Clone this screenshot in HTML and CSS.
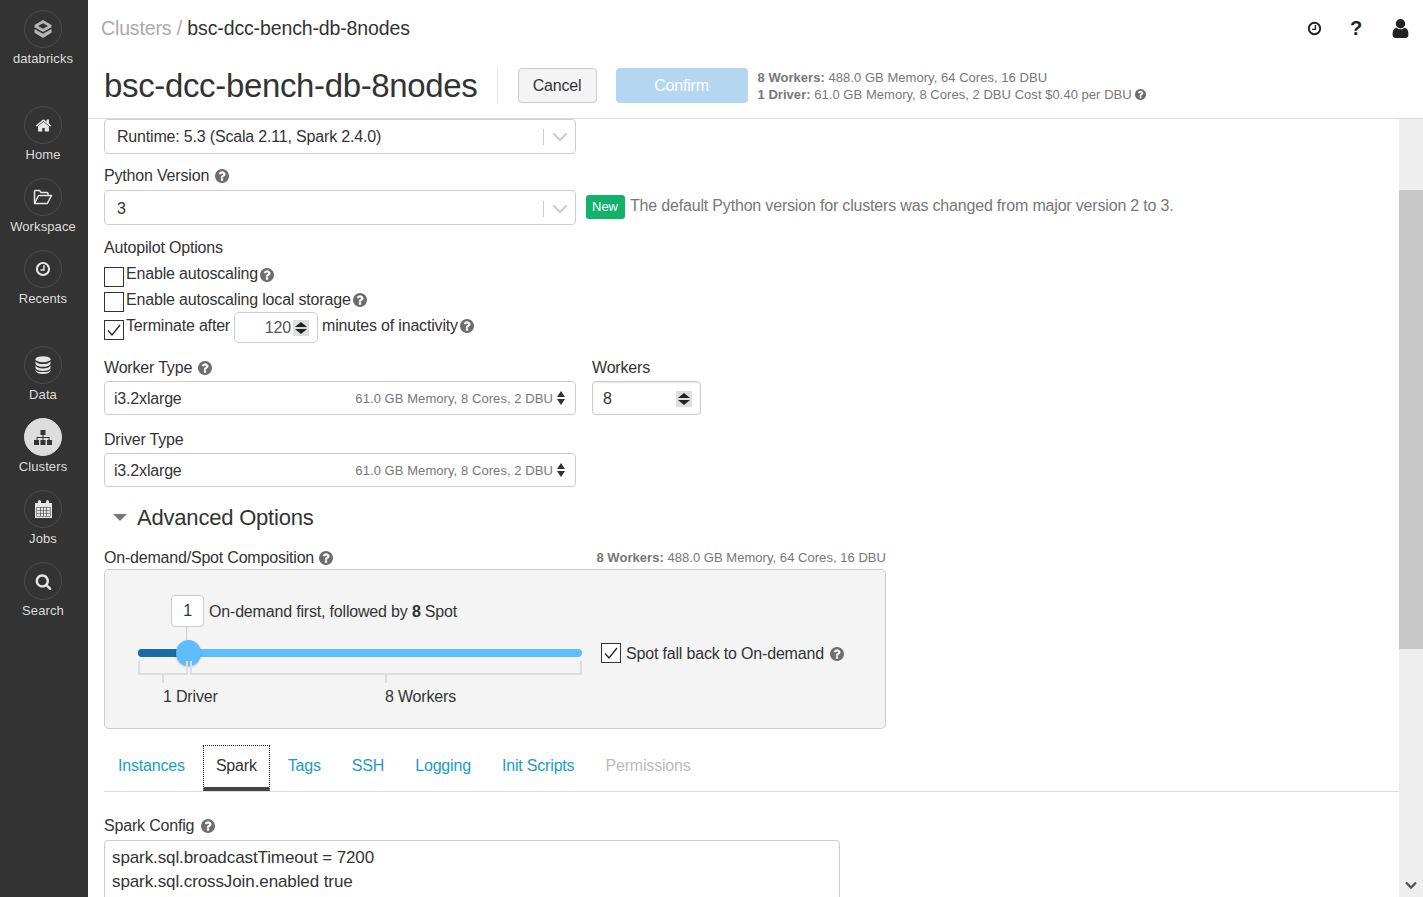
FILE: index.html
```html
<!DOCTYPE html>
<html>
<head>
	<title>bsc-dcc-bench-db-8nodes</title>
	<link rel="stylesheet" href="styles.css">
</head>
<body>
	<svg class="icon-defs" width="0" height="0">
		<symbol id="i-help" viewBox="128 128 1536 1536"><path d="M1024 1376v-192q0-14-9-23t-23-9h-192q-14 0-23 9t-9 23v192q0 14 9 23t23 9h192q14 0 23-9t9-23zm256-672q0-88-55.5-163t-138.5-116-170-41q-243 0-371 213-15 24 8 42l132 100q7 6 19 6 16 0 25-12 53-68 86-92 34-24 86-24 48 0 85.5 26t37.5 59q0 38-20 61t-68 45q-63 28-115.5 86.5t-52.5 125.5v36q0 14 9 23t23 9h192q14 0 23-9t9-23q0-19 21.5-49.5t54.5-49.5q32-18 49-28.5t46-35 44.5-48 28-60.5 12.5-81zm384 192q0 209-103 385.5t-279.5 279.5-385.5 103-385.5-103-279.5-279.5-103-385.5 103-385.5 279.5-279.5 385.5-103 385.5 103 279.5 279.5 103 385.5z"/></symbol>
		<symbol id="i-clock" viewBox="0 0 20 20"><circle cx="10" cy="10" r="7.6" fill="none" stroke="currentColor" stroke-width="2.6"/><path d="M11.2 5.4v5.8H6.8" fill="none" stroke="currentColor" stroke-width="1.9"/></symbol>
	</svg>

	<nav class="sidebar">
		<a class="nav-item nav-logo">
			<span class="nav-circle">
				<svg width="20" height="20" viewBox="0 0 20 20"><path d="M10 1l8.500 5v2.200L10 13 1.500 8.200V6z" fill="#b5b5b5"/><path d="M10 4.200L5 6.900l5 2.800 5-2.800z" fill="#333"/><path d="M1.500 10l8.500 4.800 8.500-4.800v3.800L10 19l-8.500-5.200z" fill="#b5b5b5"/></svg>
			</span>
			<span class="nav-label">databricks</span>
		</a>
		<div class="nav-group nav-group-main">
			<a class="nav-item">
				<span class="nav-circle">
					<svg width="17" height="17" viewBox="0 0 1792 1792" fill="#e6e6e6"><path d="M1472 992v480q0 26-19 45t-45 19h-384v-384h-256v384h-384q-26 0-45-19t-19-45v-480q0-1 .5-3t.5-3l575-474 575 474q1 2 1 6zm223-69l-62 74q-8 9-21 11h-3q-13 0-21-7l-692-577-692 577q-12 8-24 7-13-2-21-11l-62-74q-8-10-7-23.5t11-21.5l719-599q32-26 76-26t76 26l244 204v-195q0-14 9-23t23-9h192q14 0 23 9t9 23v408l219 182q10 8 11 21.5t-7 23.5z"/></svg>
				</span>
				<span class="nav-label">Home</span>
			</a>
			<a class="nav-item">
				<span class="nav-circle">
					<svg width="20" height="16" viewBox="0 0 20 16" fill="none" stroke="#e6e6e6" stroke-width="1.500" stroke-linejoin="round"><path d="M1.500 14V2.500q0-1 1-1h4l1.500 2h6q1 0 1 1V6.500"/><path d="M1.500 14.500h12.800l4.200-8H5.500z"/></svg>
				</span>
				<span class="nav-label">Workspace</span>
			</a>
			<a class="nav-item">
				<span class="nav-circle nav-circle-light">
					<svg class="nav-clock" width="16" height="16"><use href="#i-clock"/></svg>
				</span>
				<span class="nav-label">Recents</span>
			</a>
		</div>
		<div class="nav-group nav-group-data">
			<a class="nav-item">
				<span class="nav-circle">
					<svg width="16" height="18" viewBox="0 0 16 18" fill="#e6e6e6"><ellipse cx="8" cy="3.200" rx="7.500" ry="3"/><path d="M.5 5.200c1 2 3.800 2.900 7.500 2.900s6.500-.9 7.500-2.900V8c-1 1.900-3.800 2.800-7.500 2.800S1.500 9.900.5 8z"/><path d="M.5 9.600c1 2 3.800 2.800 7.500 2.800s6.500-.8 7.500-2.800v2.700c-1 1.900-3.800 2.700-7.500 2.700s-6.500-.8-7.500-2.700z"/><path d="M.5 13.800c1 2 3.800 2.300 7.500 2.300s6.500-.3 7.500-2.300v1.200c-1 2-3.800 3-7.500 3s-6.500-1-7.500-3z"/></svg>
				</span>
				<span class="nav-label">Data</span>
			</a>
			<a class="nav-item">
				<span class="nav-circle nav-circle-active">
					<svg width="18" height="15" viewBox="0 0 18 15" fill="#333"><rect x="6.500" y="0" width="5" height="5"/><rect x="0" y="10" width="5" height="5"/><rect x="6.500" y="10" width="5" height="5"/><rect x="13" y="10" width="5" height="5"/><path d="M8.500 5h1v2h6v3h-1V8h-5v2h-1V8h-5v2h-1V7h6z"/></svg>
				</span>
				<span class="nav-label">Clusters</span>
			</a>
			<a class="nav-item">
				<span class="nav-circle">
					<svg width="17" height="18" viewBox="0 0 17 18" fill="#e6e6e6"><path d="M0 3h3V1.500q0-1.500 1.500-1.500T6 1.500V3h5V1.500Q11 0 12.500 0T14 1.500V3h3v15H0z"/><path d="M1.500 7h14v9.500h-14z" fill="#333"/><path d="M2 7.500h3v2.400H2zm3.600 0h2.600v2.400H5.600zm3.200 0h2.600v2.400H8.800zm3.200 0h3v2.400h-3zM2 10.500h3v2.400H2zm3.600 0h2.600v2.400H5.600zm3.200 0h2.600v2.400H8.800zm3.200 0h3v2.400h-3zM2 13.500h3V16H2zm3.600 0h2.600V16H5.600zm3.200 0h2.600V16H8.800zm3.200 0h3V16h-3z"/></svg>
				</span>
				<span class="nav-label">Jobs</span>
			</a>
			<a class="nav-item">
				<span class="nav-circle">
					<svg width="17" height="17" viewBox="0 0 1792 1792" fill="#e6e6e6"><path d="M1216 832q0-185-131.500-316.500t-316.500-131.500-316.500 131.500-131.500 316.500 131.500 316.500 316.500 131.500 316.500-131.500 131.500-316.500zm512 832q0 52-38 90t-90 38q-54 0-90-38l-343-342q-179 124-399 124-143 0-273.500-55.500t-225-150-150-225-55.500-273.500 55.500-273.500 150-225 225-150 273.500-55.500 273.500 55.500 225 150 150 225 55.500 273.500q0 220-124 399l343 343q37 37 37 90z"/></svg>
				</span>
				<span class="nav-label">Search</span>
			</a>
		</div>
	</nav>

	<div class="main">
		<header class="topbar">
			<div class="topbar-row">
				<div class="breadcrumb"><span class="crumb-muted">Clusters /</span> bsc-dcc-bench-db-8nodes</div>
				<div class="top-icons">
					<svg class="top-clock" width="15" height="15"><use href="#i-clock"/></svg>
					<span class="top-help">?</span>
					<svg width="19" height="19" viewBox="256 128 1280 1536" fill="#222"><path d="M1536 1399q0 109-62.500 187t-150.500 78h-854q-88 0-150.500-78t-62.500-187q0-85 8.500-160.500t31.500-152 58.500-131 94-89 134.500-34.500q131 128 313 128t313-128q76 0 134.500 34.500t94 89 58.500 131 31.500 152 8.500 160.500zm-256-887q0 159-112.500 271.500t-271.500 112.500-271.500-112.500-112.500-271.500 112.500-271.500 271.500-112.500 271.500 112.500 112.500 271.500z"/></svg>
				</div>
			</div>
			<div class="title-row">
				<h1 class="page-title">bsc-dcc-bench-db-8nodes</h1>
				<button class="btn btn-cancel">Cancel</button>
				<button class="btn btn-confirm">Confirm</button>
				<div class="cluster-info">
					<div><b>8 Workers:</b> 488.0 GB Memory, 64 Cores, 16 DBU</div>
					<div><b>1 Driver:</b> 61.0 GB Memory, 8 Cores, 2 DBU Cost $0.40 per DBU <svg class="help help-sm"><use href="#i-help"/></svg></div>
				</div>
			</div>
		</header>

		<div class="body-wrap">
			<div class="content">
				<div class="combo combo-first">
					<span class="combo-value">Runtime: 5.3 (Scala 2.11, Spark 2.4.0)</span>
					<span class="combo-sep"></span>
					<svg class="combo-arrow" width="16" height="10" viewBox="0 0 16 10"><path d="M1.500 1.500L8 8l6.500-6.500" fill="none" stroke="#ccc" stroke-width="2"/></svg>
				</div>

				<label class="field-label python-label">Python Version <svg class="help"><use href="#i-help"/></svg></label>
				<div class="python-row">
					<div class="combo">
						<span class="combo-value">3</span>
						<span class="combo-sep"></span>
						<svg class="combo-arrow" width="16" height="10" viewBox="0 0 16 10"><path d="M1.500 1.500L8 8l6.500-6.500" fill="none" stroke="#ccc" stroke-width="2"/></svg>
					</div>
					<span class="badge-new">New</span>
					<span class="python-note">The default Python version for clusters was changed from major version 2 to 3.</span>
				</div>

				<div class="field-label autopilot-label">Autopilot Options</div>
				<div class="check-row check-row-1">
					<span class="checkbox"></span>
					<span>Enable autoscaling</span><svg class="help help-tight"><use href="#i-help"/></svg>
				</div>
				<div class="check-row check-row-2">
					<span class="checkbox"></span>
					<span>Enable autoscaling local storage</span><svg class="help help-tight"><use href="#i-help"/></svg>
				</div>
				<div class="check-row check-row-3">
					<span class="checkbox"><svg width="18" height="18" viewBox="0 0 18 18"><path d="M3 9.500l4 4.500 8-10" fill="none" stroke="#222" stroke-width="1.300"/></svg></span>
					<span>Terminate after</span>
					<span class="minutes-input">120<span class="spinner"><i class="spin-up"></i><i class="spin-down"></i></span></span>
					<span>minutes of inactivity</span><svg class="help help-tight"><use href="#i-help"/></svg>
				</div>

				<div class="type-row">
					<div class="type-col">
						<label class="field-label">Worker Type <svg class="help"><use href="#i-help"/></svg></label>
						<div class="type-select">
							<span class="type-value">i3.2xlarge</span>
							<span class="type-detail">61.0 GB Memory, 8 Cores, 2 DBU</span>
							<span class="sort-arrows"><i class="sort-up"></i><i class="sort-down"></i></span>
						</div>
					</div>
					<div class="workers-col">
						<label class="field-label">Workers</label>
						<div class="workers-input">8<span class="spinner"><i class="spin-up"></i><i class="spin-down"></i></span></div>
					</div>
				</div>

				<div class="type-col driver-col">
					<label class="field-label">Driver Type</label>
					<div class="type-select">
						<span class="type-value">i3.2xlarge</span>
						<span class="type-detail">61.0 GB Memory, 8 Cores, 2 DBU</span>
						<span class="sort-arrows"><i class="sort-up"></i><i class="sort-down"></i></span>
					</div>
				</div>

				<h2 class="section-title"><i class="caret-down"></i>Advanced Options</h2>

				<div class="composition-head">
					<label class="field-label">On-demand/Spot Composition <svg class="help"><use href="#i-help"/></svg></label>
					<span class="composition-info"><b>8 Workers:</b> 488.0 GB Memory, 64 Cores, 16 DBU</span>
				</div>
				<div class="composition-box">
					<div class="bubble-row">
						<span class="bubble">1</span>
						<span class="bubble-text">On-demand first, followed by <b>8</b> Spot</span>
					</div>
					<div class="slider-row">
						<div class="slider">
							<div class="track"><span class="track-fill"></span></div>
							<span class="thumb"></span>
							<div class="brackets">
								<span class="bracket bracket-driver"></span>
								<span class="bracket bracket-workers"></span>
							</div>
						</div>
						<span class="checkbox spot-check"><svg width="18" height="18" viewBox="0 0 18 18"><path d="M3 9.500l4 4.500 8-10" fill="none" stroke="#222" stroke-width="1.300"/></svg></span>
						<span class="spot-label">Spot fall back to On-demand <svg class="help"><use href="#i-help"/></svg></span>
					</div>
					<div class="slider-labels">
						<span class="driver-label">1 Driver</span>
						<span>8 Workers</span>
					</div>
				</div>

				<div class="tabs">
					<a class="tab">Instances</a>
					<a class="tab tab-active">Spark</a>
					<a class="tab">Tags</a>
					<a class="tab">SSH</a>
					<a class="tab">Logging</a>
					<a class="tab">Init Scripts</a>
					<a class="tab tab-disabled">Permissions</a>
				</div>

				<label class="field-label spark-label">Spark Config <svg class="help"><use href="#i-help"/></svg></label>
				<div class="config-box">
					<div>spark.sql.broadcastTimeout = 7200</div>
					<div>spark.sql.crossJoin.enabled true</div>
				</div>
			</div>

			<div class="scrollbar">
				<div class="scroll-thumb"></div>
				<svg class="scroll-arrow" width="12" height="9" viewBox="0 0 12 9"><path d="M1 1.500l5 5 5-5" fill="none" stroke="#555" stroke-width="2.400"/></svg>
			</div>
		</div>
	</div>
</body>
</html>
```

FILE: styles.css
```css
* {
	box-sizing: border-box;
}

html, body {
	height: 100%;
}

body {
	margin: 0;
	display: flex;
	overflow: hidden;
	color: #333;
	background-color: #fff;
	font-family: "Liberation Sans", Arial, sans-serif;
	font-size: 16px;
	letter-spacing: -0.18px;
	line-height: 22px;
}

.icon-defs {
	position: absolute;
}

/* sidebar */
.sidebar {
	flex: 0 0 88px;
	height: 100%;
	padding: 10px 2px 0 0;
	background-color: #333;
}

.nav-item {
	display: flex;
	flex-direction: column;
	align-items: center;
	height: 72px;
}

.nav-group-main {
	margin-top: 24px;
}

.nav-group-data {
	margin-top: 24px;
}

.nav-circle {
	display: flex;
	align-items: center;
	justify-content: center;
	width: 38px;
	height: 38px;
	border: 1px solid #4a4a4a;
	border-radius: 50%;
}

.nav-circle-active {
	background-color: #ddd;
	border-color: #ddd;
}

.nav-clock {
	color: #e6e6e6;
}

.nav-label {
	margin-top: 2px;
	color: #ddd;
	font-size: 13px;
	letter-spacing: 0.1px;
	line-height: 18px;
	white-space: nowrap;
}

/* header */
.main {
	flex: 1;
	min-width: 0;
	display: flex;
	flex-direction: column;
	height: 100%;
}

.topbar {
	flex: 0 0 119px;
	border-bottom: 1px solid #ddd;
}

.topbar-row {
	display: flex;
	justify-content: space-between;
	align-items: center;
	height: 28px;
	margin-top: 14px;
	padding-left: 13px;
}

.breadcrumb {
	font-size: 19.5px;
	letter-spacing: -0.13px;
}

.crumb-muted {
	color: #aaa;
}

.top-icons {
	display: flex;
	align-items: center;
	margin-right: 13px;
}

.top-clock {
	margin-right: 28px;
	color: #222;
}

.top-help {
	width: 12px;
	margin-right: 29px;
	color: #222;
	font-size: 20px;
	font-weight: bold;
}

.title-row {
	display: flex;
	align-items: flex-start;
	margin-top: 26px;
	padding-left: 16px;
}

.page-title {
	margin: 0;
	padding-right: 19px;
	height: 36px;
	border-right: 1px solid #e5e5e5;
	font-size: 33px;
	font-weight: normal;
	letter-spacing: -0.35px;
	line-height: 36px;
}

.btn {
	height: 35px;
	border-radius: 4px;
	font-family: inherit;
	font-size: 16px;
	letter-spacing: inherit;
}

.btn-cancel {
	width: 79px;
	margin-left: 20px;
	border: 1px solid #ccc;
	background-color: #f4f4f4;
	color: #333;
}

.btn-confirm {
	width: 132px;
	margin-left: 19px;
	border: 0;
	background-color: #b5d6f0;
	color: #fff;
}

.cluster-info {
	margin-left: 10px;
	margin-top: 1px;
	color: #777;
	font-size: 13px;
	letter-spacing: 0.04px;
	line-height: 17px;
}

/* form */
.body-wrap {
	flex: 1;
	min-height: 0;
	display: flex;
	overflow: hidden;
}

.content {
	flex: 1;
	min-width: 0;
	padding-left: 16px;
}

.field-label {
	display: block;
	height: 22px;
	padding-top: 1px;
}

.help {
	width: 14px;
	height: 14px;
	margin-left: 2px;
	fill: #6d6d6d;
	vertical-align: -2px;
}

.help-sm {
	width: 11px;
	height: 11px;
	margin-left: 0;
	vertical-align: -1px;
}

.help-tight {
	flex: none;
	margin-top: 4px;
}

.combo {
	display: flex;
	align-items: center;
	flex: 0 0 472px;
	width: 472px;
	height: 35px;
	padding: 2px 0 0 12px;
	border: 1px solid #ccc;
	border-radius: 4px;
}

.combo-first {
	padding-top: 0;
}

.combo-value {
	flex: 1;
}

.combo-sep {
	width: 1px;
	height: 16px;
	background-color: #ccc;
}

.combo-arrow {
	margin: 0 7px 0 8px;
}

.python-label {
	margin-top: 10px;
	margin-bottom: 4px;
}

.python-row {
	display: flex;
	align-items: flex-start;
}

.badge-new {
	margin-left: 10px;
	margin-top: 5px;
	padding: 0 7px 0 6px;
	height: 24px;
	border-radius: 3px;
	background-color: #13b16c;
	color: #fff;
	font-size: 13px;
	letter-spacing: 0;
	line-height: 24px;
}

.python-note {
	margin-left: 5px;
	margin-top: 5px;
	color: #777;
}

.autopilot-label {
	margin-top: 11px;
	margin-bottom: 4px;
}

.check-row {
	display: flex;
	align-items: flex-start;
	padding-top: 1px;
}

.checkbox {
	flex: none;
	display: block;
	width: 20px;
	height: 20px;
	margin-right: 2px;
	margin-top: 4px;
	border: 1px solid #333;
	background-color: #fff;
}

.checkbox svg {
	display: block;
}

.check-row-1 {
	height: 26px;
}

.check-row-1 .help-tight {
	margin-top: 5px;
}

.check-row-2 {
	height: 26px;
}

.check-row-2 .checkbox {
	margin-top: 3px;
}

.check-row-3 {
	height: 29px;
}

.check-row-3 .checkbox {
	margin-top: 5px;
}

.minutes-input {
	flex: none;
	display: flex;
	align-items: center;
	justify-content: flex-end;
	width: 84px;
	height: 31px;
	margin: -3px 4px 0;
	padding-right: 8px;
	border: 1px solid #ccc;
	border-radius: 5px;
	color: #555;
}

.spinner {
	display: flex;
	flex-direction: column;
	align-items: center;
	justify-content: center;
	width: 16px;
	height: 16px;
	margin-left: 2px;
	background-color: #ddd;
}

.spin-up, .spin-down {
	width: 0;
	height: 0;
	border-left: 6px solid transparent;
	border-right: 6px solid transparent;
}

.spin-up {
	margin-bottom: 2px;
	border-bottom: 5px solid #222;
}

.spin-down {
	border-top: 5px solid #222;
}

.type-row {
	display: flex;
	margin-top: 13px;
}

.type-col {
	width: 472px;
}

.type-col .field-label,
.workers-col .field-label {
	margin-bottom: 3px;
}

.workers-col {
	margin-left: 16px;
}

.type-select {
	display: flex;
	align-items: center;
	height: 34px;
	padding: 2px 10px 0 9px;
	border: 1px solid #ccc;
	border-radius: 4px;
}

.type-value {
	flex: 1;
}

.type-detail {
	margin-right: 4px;
	color: #777;
	font-size: 13px;
	letter-spacing: 0.07px;
}

.sort-arrows {
	display: flex;
	flex-direction: column;
	margin-top: -2px;
}

.sort-up, .sort-down {
	width: 0;
	height: 0;
	border-left: 4px solid transparent;
	border-right: 4px solid transparent;
}

.sort-up {
	margin-bottom: 2px;
	border-bottom: 6px solid #333;
}

.sort-down {
	border-top: 6px solid #333;
}

.workers-input {
	display: flex;
	align-items: center;
	justify-content: space-between;
	width: 109px;
	height: 34px;
	padding: 2px 8px 0 10px;
	border: 1px solid #ccc;
	border-radius: 4px;
	box-shadow: inset 0 1px 2px #0000001a;
}

.driver-col {
	margin-top: 13px;
}

.section-title {
	display: flex;
	align-items: center;
	height: 30px;
	margin: 15px 0 0;
	padding-top: 1px;
	font-size: 22px;
	font-weight: normal;
	letter-spacing: -0.2px;
}

.caret-down {
	width: 0;
	height: 0;
	margin: 0 10px 0 9px;
	border-left: 7px solid transparent;
	border-right: 7px solid transparent;
	border-top: 7px solid #777;
}

/* composition slider */
.composition-head {
	display: flex;
	justify-content: space-between;
	width: 782px;
	height: 23px;
	margin-top: 14px;
}

.composition-head .field-label {
	letter-spacing: -0.2px;
}

.composition-head .help {
	margin-left: 1px;
}

.composition-info {
	padding-top: 1px;
	color: #777;
	font-size: 13px;
	letter-spacing: 0.04px;
}

.composition-box {
	width: 782px;
	height: 160px;
	padding: 25px 0 0 33px;
	border: 1px solid #ccc;
	border-radius: 5px;
	background-color: #f4f4f4;
}

.bubble-row {
	display: flex;
	align-items: center;
	height: 32px;
	margin-left: 33px;
}

.bubble {
	position: relative;
	width: 33px;
	height: 32px;
	margin-right: 5px;
	border: 1px solid #ccc;
	border-radius: 4px;
	background-color: #fff;
	text-align: center;
	line-height: 30px;
}

.bubble::after {
	content: "";
	position: absolute;
	left: 14px;
	top: 31px;
	width: 1px;
	height: 13px;
	background-color: #ccc;
}

.bubble-text {
	padding-top: 2px;
}

.slider-row {
	display: flex;
	align-items: flex-start;
	margin-top: 13px;
}

.slider {
	position: relative;
	width: 444px;
	padding-top: 9px;
}

.track {
	height: 8px;
	border-radius: 4px;
	background-color: #5ebdfc;
	overflow: hidden;
}

.track-fill {
	display: block;
	width: 42px;
	height: 8px;
	background-color: #1a6aa3;
}

.thumb {
	position: absolute;
	left: 38px;
	top: 0;
	width: 25px;
	height: 26px;
	border-radius: 50%;
	background-color: #5ebdfc;
	box-shadow: 0 1px 2px #00000040;
}

.brackets {
	display: flex;
	gap: 2px;
	height: 14px;
	margin-top: 4px;
}

.bracket {
	position: relative;
	border: 2px solid #ddd;
	border-top: 0;
}

.bracket::after {
	content: "";
	position: absolute;
	top: 12px;
	width: 2px;
	height: 10px;
	background-color: #ddd;
}

.bracket-driver {
	width: 50px;
}

.bracket-driver::after {
	left: 22px;
}

.bracket-workers {
	flex: 1;
}

.bracket-workers::after {
	left: 193px;
}

.spot-check {
	margin: 3px 5px 0 19px;
}

.spot-label {
	margin-top: 3px;
}

.slider-labels {
	display: flex;
	margin: 11px 0 0 25px;
}

.driver-label {
	width: 222px;
}

/* tabs */
.tabs {
	display: flex;
	height: 47px;
	margin-top: 16px;
	padding-left: 1px;
	border-bottom: 1px solid #ddd;
}

.tab {
	height: 46px;
	margin-right: 5px;
	padding: 10px 13px 0;
	color: #1b9cc8;
}

.tab-active {
	height: 46px;
	border: 1px dotted #222;
	border-bottom: 4px solid #444;
	padding: 9px 12px 0;
	color: #333;
}

.tab-disabled {
	color: #bbb;
}

.spark-label {
	margin-top: 22px;
	margin-bottom: 4px;
}

.config-box {
	width: 736px;
	height: 80px;
	padding: 5px 7px;
	border: 1px solid #ccc;
	border-radius: 4px;
	font-size: 17px;
	letter-spacing: -0.1px;
	line-height: 24px;
}

/* scrollbar */
.scrollbar {
	position: relative;
	flex: 0 0 24px;
	padding-top: 71px;
	background-color: #eee;
}

.scroll-thumb {
	height: 459px;
	background-color: #c8c8c8;
}

.scroll-arrow {
	position: absolute;
	left: 6px;
	bottom: 7px;
}
```
